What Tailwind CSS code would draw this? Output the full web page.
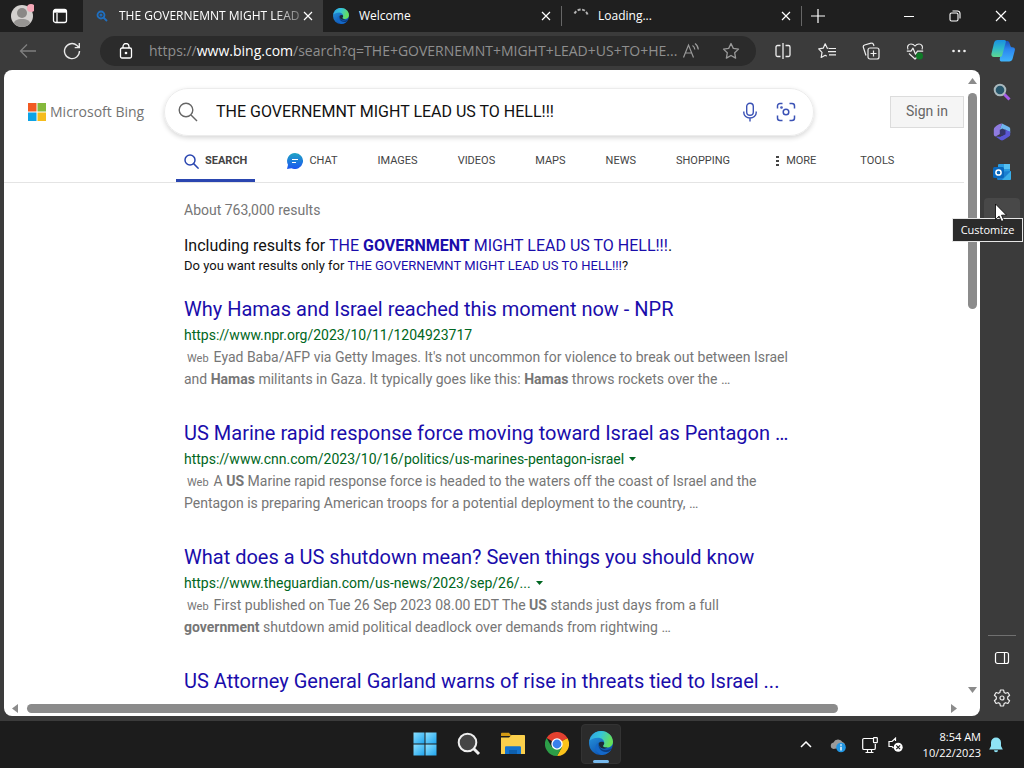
<!DOCTYPE html>
<html lang="en">
<head>
    <meta charset="UTF-8">
    <meta name="viewport" content="width=device-width, initial-scale=1.0">
    <title>THE GOVERNEMNT MIGHT LEAD US TO HELL!!! - Search</title>
    <!-- Tailwind CSS -->
    <script src="https://cdn.jsdelivr.net/npm/@tailwindcss/browser@4"></script>
</head>
<body class="flex h-screen flex-col overflow-hidden bg-[#3b3b3b] font-['Open_Sans','Noto_Sans',sans-serif] text-white">

    <!-- Shared gradients and the Edge logo -->
    <svg class="absolute size-0" aria-hidden="true">
        <defs>
            <linearGradient id="edgeTop" x1="0" y1="0" x2="1" y2="0.3">
                <stop offset="0" stop-color="#2f9fe6"/>
                <stop offset="0.5" stop-color="#36c5d8"/>
                <stop offset="1" stop-color="#66e05a"/>
            </linearGradient>
            <linearGradient id="edgeLeft" x1="0" y1="0" x2="0.6" y2="1">
                <stop offset="0" stop-color="#2a9fe2"/>
                <stop offset="1" stop-color="#0c4fb0"/>
            </linearGradient>
            <linearGradient id="blueTile" x1="0" y1="0" x2="1" y2="1">
                <stop offset="0" stop-color="#8be0ff"/>
                <stop offset="1" stop-color="#1fa4ee"/>
            </linearGradient>
            <linearGradient id="chatFill" x1="0" y1="0" x2="0" y2="1">
                <stop offset="0" stop-color="#20a5c4"/>
                <stop offset="1" stop-color="#1b55f0"/>
            </linearGradient>
            <linearGradient id="copilotLeft" x1="0" y1="0" x2="0" y2="1">
                <stop offset="0" stop-color="#1a8fe0"/>
                <stop offset="0.5" stop-color="#2fb9c9"/>
                <stop offset="1" stop-color="#5fd990"/>
            </linearGradient>
            <linearGradient id="copilotRight" x1="0" y1="0" x2="0" y2="1">
                <stop offset="0" stop-color="#1c4fb5"/>
                <stop offset="0.4" stop-color="#2b86f0"/>
                <stop offset="1" stop-color="#3fb4fb"/>
            </linearGradient>
        </defs>
        <symbol id="edge" viewBox="0 0 24 24">
            <circle cx="12" cy="12" r="12" fill="url(#edgeLeft)"/>
            <path d="M.4 10C1.500 4 6.300 0 12 0c6.800 0 12 5 12 10.800 0 3.600-2.700 5.800-6 5.800-2.300 0-4-.8-4-1.700 0-.6 1.200-1.200 1.200-3.200C15.200 9 12.500 6.800 9 6.800 5 6.800 1.800 8.500.4 10z" fill="url(#edgeTop)"/>
            <path d="M9.300 11.500C8 14 9.500 20 15.500 20.800c2.500.3 5-.6 7-2.300C20.300 21.800 16.500 24 12 24 8.500 22.500 6.500 19.500 6.500 16.500c0-2.200 1.200-4 2.800-5z" fill="#1468c8"/>
            <path d="M9.700 12c-.3 4.500 3 7.200 7 7.200 2.300 0 4.500-.9 6-2.200-1 2-1.500 2.500-2.500 3.500-6 2-12-2.500-10.500-8.500z" fill="#0b3d80"/>
            <path d="M9.700 12c1.500-1.800 5-1.800 5.500 0 .1 1.600-1.200 2.200-1.200 3 0 1 2 1.700 4.500 1.600-3 2.300-9 1-8.800-4.600z" fill="#1d2a35"/>
        </symbol>
    </svg>

    <!-- Tab strip -->
    <header class="flex h-8 shrink-0 items-stretch bg-[#1f1f1f] text-xs">
        <div class="flex w-[83px] shrink-0 items-center gap-[18px] pl-[10px]">
            <button aria-label="Profile">
                <svg class="size-6" viewBox="0 0 24 24">
                    <circle cx="12" cy="12" r="11" fill="#d3d0ce"/>
                    <circle cx="12" cy="9" r="5" fill="#8a8886"/>
                    <path d="M4 19.500c0-3 3-4.500 8-4.500s8 1.500 8 4.500A11 11 0 0 1 4 19.500z" fill="#979593"/>
                    <circle cx="21" cy="4" r="4" fill="#f5a8b8"/>
                </svg>
            </button>
            <button aria-label="Tab actions menu">
                <svg class="size-4" viewBox="0 0 16 16" fill="none" stroke="#fff" stroke-width="1.300">
                    <rect x="1.500" y="1.500" width="13" height="13" rx="2"/>
                    <path d="M2 3.200h12" stroke-width="3"/>
                    <path d="M5 5v9"/>
                </svg>
            </button>
        </div>
        <div class="flex w-60 items-center bg-[#3b3b3b] pr-2 pl-[13px]">
            <svg class="size-3 shrink-0" viewBox="0 0 12 12" fill="none" stroke="#1f6fc0" stroke-width="1.800">
                <circle cx="5" cy="5" r="3.500"/><circle cx="5" cy="5" r=".6"/><path d="M7.500 7.500l3.500 3.500"/>
            </svg>
            <span class="ml-[11px] flex-1 whitespace-nowrap [mask-image:linear-gradient(to_right,#000_85%,#0004)]">THE GOVERNEMNT MIGHT LEAD</span>
            <button class="p-[2px]" aria-label="Close tab">
                <svg class="size-[10px]" viewBox="0 0 10 10" stroke="#fff" stroke-width="1.200"><path d="M1 1l8 8M9 1l-8 8"/></svg>
            </button>
        </div>
        <div class="flex w-[239px] items-center border-r border-[#5a5a5a] bg-[#1f1f1f] pr-2 pl-[10px] [border-image:linear-gradient(transparent_20%,#666_20%,#666_80%,transparent_80%)_1]">
            <svg class="size-4 shrink-0"><use href="#edge"/></svg>
            <span class="ml-[10px] flex-1">Welcome</span>
            <button class="p-[2px]" aria-label="Close tab">
                <svg class="size-[10px]" viewBox="0 0 10 10" stroke="#fff" stroke-width="1.200"><path d="M1 1l8 8M9 1l-8 8"/></svg>
            </button>
        </div>
        <div class="flex w-60 items-center border-r border-[#5a5a5a] pr-2 pl-[11px] [border-image:linear-gradient(transparent_20%,#666_20%,#666_80%,transparent_80%)_1]">
            <svg class="size-4 shrink-0" viewBox="0 0 16 16" fill="none" stroke="#b5b5b5" stroke-width="2" stroke-dasharray="3 1.500">
                <path d="M1.500 5.500A7 7 0 0 1 14.800 8"/>
            </svg>
            <span class="ml-[9px] flex-1">Loading...</span>
            <button class="p-[2px]" aria-label="Close tab">
                <svg class="size-[10px]" viewBox="0 0 10 10" stroke="#fff" stroke-width="1.200"><path d="M1 1l8 8M9 1l-8 8"/></svg>
            </button>
        </div>
        <button class="px-2" aria-label="New tab">
            <svg class="size-4" viewBox="0 0 16 16" stroke="#fff" stroke-width="1.200"><path d="M8 1v14M1 8h14"/></svg>
        </button>
        <div class="ml-auto flex">
            <button class="flex w-[46px] items-center justify-center" aria-label="Minimize">
                <svg class="size-3" viewBox="0 0 12 12" stroke="#fff"><path d="M1 6.500h10"/></svg>
            </button>
            <button class="flex w-[46px] items-center justify-center" aria-label="Restore">
                <svg class="size-3" viewBox="0 0 12 12" fill="none" stroke="#fff" stroke-width="1.100">
                    <rect x="1" y="3" width="8" height="8" rx="1.500"/><path d="M3.500 1h5A2.500 2.500 0 0 1 11 3.500v5"/>
                </svg>
            </button>
            <button class="flex w-[46px] items-center justify-center" aria-label="Close">
                <svg class="size-3" viewBox="0 0 12 12" stroke="#fff" stroke-width="1.200"><path d="M1 1l10 10M11 1L1 11"/></svg>
            </button>
        </div>
    </header>

    <!-- Toolbar -->
    <div class="flex h-[38px] shrink-0 items-center pl-[6px]">
        <button class="flex w-11 justify-center" aria-label="Back">
            <svg class="size-[18px]" viewBox="0 0 18 18" fill="none" stroke="#7f7f7f" stroke-width="1.300"><path d="M17 9H1.500M8 2.500L1.500 9 8 15.500"/></svg>
        </button>
        <button class="flex w-11 justify-center" aria-label="Refresh">
            <svg class="size-[18px]" viewBox="0 0 18 18" fill="none" stroke="#e8e8e8" stroke-width="1.400"><path d="M16.500 9A7.500 7.500 0 1 1 14 3.500l2 2M16.300 1v4.600h-4.600"/></svg>
        </button>
        <div class="mr-[5px] ml-[6px] flex h-[30px] min-w-0 flex-1 items-center rounded-full bg-[#2b2b2b] pr-4 pl-[18px]">
            <svg class="size-4 shrink-0" viewBox="0 0 16 16" fill="none" stroke="#fff" stroke-width="1.300">
                <rect x="2.500" y="5" width="11" height="10" rx="1.500"/><path d="M5 5V3.500a3 3 0 0 1 6 0V5"/><circle cx="8" cy="10" r=".7" fill="#fff"/>
            </svg>
            <div role="textbox" contenteditable="true" aria-label="Address" class="ml-[15px] min-w-0 flex-1 text-sm whitespace-nowrap text-[#8f8f8f]">https://<span class="text-white">www.bing.com</span>/search?q=THE+GOVERNEMNT+MIGHT+LEAD+US+TO+HE...</div>
            <button aria-label="Read aloud">
                <svg class="size-[18px]" viewBox="0 0 18 18" fill="none" stroke="#9a9a9a" stroke-width="1.200"><path d="M1.500 15.500L6.500 3l5 12.500M3.500 11h6M10.500 3.500a5 5 0 0 1 2.300 4M13 1.500a8 8 0 0 1 3.300 6"/></svg>
            </button>
            <button class="ml-[22px]" aria-label="Add to favorites">
                <svg class="size-[18px]" viewBox="0 0 18 18" fill="none" stroke="#9a9a9a" stroke-width="1.300" stroke-linejoin="round"><path d="M9 1.500l2.300 4.900 5.200.7-3.800 3.700.9 5.300L9 13.500l-4.600 2.600.9-5.300L1.500 7.100l5.200-.7z"/></svg>
            </button>
        </div>
        <button class="flex w-11 justify-center" aria-label="Split screen">
            <svg class="size-4" viewBox="0 0 16 16" fill="none" stroke="#eee" stroke-width="1.300"><path d="M8 0v16M5.500 2.500h-3a1.500 1.500 0 0 0-1.500 1.500v8a1.500 1.500 0 0 0 1.500 1.500h3M10.500 2.500h3A1.500 1.500 0 0 1 15 4v8a1.500 1.500 0 0 1-1.500 1.500h-3"/></svg>
        </button>
        <button class="flex w-11 justify-center" aria-label="Favorites">
            <svg class="size-[18px]" viewBox="0 0 18 18" fill="none" stroke="#eee" stroke-width="1.200" stroke-linejoin="round"><path d="M10.500 6.400L9.300 6.200 7.200 1.800 5.200 6.200l-4.500.7L4 10.300l-.8 5.200 4-2.200 1.500.8M11 6.500h7M10 9.700h8M11 12.900h7"/></svg>
        </button>
        <button class="flex w-11 justify-center" aria-label="Collections">
            <svg class="size-[18px]" viewBox="0 0 18 18" fill="none" stroke="#eee" stroke-width="1.200"><rect x="6" y="6" width="11" height="11" rx="2"/><path d="M11.500 8.500v6M8.500 11.500h6M4 13.500L1.400 5.500A2 2 0 0 1 2.600 3L9 1.200a2 2 0 0 1 2.500 1.300l.5 1.500"/></svg>
        </button>
        <button class="flex w-11 justify-center" aria-label="Browser essentials">
            <svg class="size-[18px]" viewBox="0 0 18 18" fill="none" stroke="#eee" stroke-width="1.200" stroke-linejoin="round"><path d="M2 7.500C.5 4.500 2.500 2 5 2c2 0 3.200 1 4 2 .8-1 2-2 4-2 2.500 0 4.500 2.500 3 5.500M.8 9.200H5l2-3 2.500 6 2-3h5.700M3 11.500l6 5.500 2-2"/><circle cx="13.500" cy="14" r="3.500" fill="#0f7b28" stroke="none"/></svg>
        </button>
        <button class="flex w-11 justify-center" aria-label="Settings and more">
            <svg class="size-4" viewBox="0 0 16 16" fill="#eee"><circle cx="2.500" cy="8" r="1.300"/><circle cx="8" cy="8" r="1.300"/><circle cx="13.500" cy="8" r="1.300"/></svg>
        </button>
        <button class="flex w-[43px] justify-center" aria-label="Copilot">
            <svg class="size-6" viewBox="0 0 24 24">
                <path d="M12 2h4c1.300 0 2 .6 2.400 1.800L19.500 7c.3 1 .9 1.300 1.900 1.300 1.900 0 2.900 1.300 2.400 3.200l-2.200 8.300c-.5 1.800-1.700 2.800-3.500 2.800h-7c-2.100 0-2.600-1.400-2.300-3z" fill="url(#copilotRight)"/>
                <path d="M6.500 1h6.800c1.300 0 1.800.8 1.500 2l-3.600 13.300C10.800 17.600 9.900 18 8.700 18H3C1 18 0 16.700.5 14.500L3 4c.5-2 1.700-3 3.500-3z" fill="url(#copilotLeft)"/>
            </svg>
        </button>
    </div>

    <div class="flex min-h-0 flex-1">

        <!-- Web page -->
        <main class="mb-[5px] ml-1 flex min-w-0 flex-1 flex-col overflow-hidden rounded-[8px] bg-white font-['Roboto',sans-serif]">
            <div class="flex min-h-0 flex-1">
                <div class="min-w-0 flex-1 overflow-hidden">
                    <div class="border-b border-[#e4e4e4] pt-[18px]">
                        <div class="flex items-center pl-6">
                            <a href="#" class="flex w-[136px] shrink-0 items-center gap-1 font-['Open_Sans','Noto_Sans',sans-serif] text-sm font-medium whitespace-nowrap text-[#737373]">
                                <svg class="size-[18px] shrink-0" viewBox="0 0 18 18">
                                    <path fill="#f25a22" d="M0 0h8.500v8.500H0z"/><path fill="#85b93c" d="M9.500 0H18v8.500H9.500z"/>
                                    <path fill="#0da3e6" d="M0 9.500h8.500V18H0z"/><path fill="#f5bc1c" d="M9.500 9.500H18V18H9.500z"/>
                                </svg>
                                <span>Microsoft Bing</span>
                            </a>
                            <form class="flex h-12 w-[650px] min-w-0 items-center rounded-full border border-[#ececec] pr-[17px] pl-[13px] shadow-[0_2px_5px_rgba(0,0,0,0.16)]">
                                <svg class="size-5 shrink-0" viewBox="0 0 20 20" fill="none" stroke="#666" stroke-width="1.400"><circle cx="8" cy="8" r="6.800"/><path d="M13 13l6 6"/></svg>
                                <input type="text" aria-label="Search" value="THE GOVERNEMNT MIGHT LEAD US TO HELL!!!" class="ml-[18px] min-w-0 flex-1 text-base text-[#111] outline-none">
                                <button type="button" aria-label="Voice search">
                                    <svg class="size-5" viewBox="0 0 20 20" fill="none" stroke="#3b52b5" stroke-width="1.400"><rect x="6.700" y="1.200" width="6.600" height="12" rx="3.300"/><path d="M3.800 9.500v1.200a6.200 5.300 0 0 0 12.400 0V9.500M10 16v3.500"/></svg>
                                </button>
                                <button type="button" class="ml-4" aria-label="Visual search">
                                    <svg class="size-5" viewBox="0 0 20 20" fill="none" stroke="#3b52b5" stroke-width="1.500"><path d="M1.500 6.500V4A2.500 2.500 0 0 1 4 1.500h2.500M13.500 1.500H16A2.500 2.500 0 0 1 18.500 4v2.500M18.500 13.500V16a2.500 2.500 0 0 1-2.500 2.500h-2.500M6.500 18.500H4A2.500 2.500 0 0 1 1.500 16v-2.500"/><circle cx="10" cy="10" r="2.800"/><circle cx="5.500" cy="5.500" r=".6"/></svg>
                                </button>
                            </form>
                            <button class="ml-auto h-8 w-[74px] shrink-0 border border-[#dcdcdc] bg-[#f5f5f5] pb-[2px] text-sm text-[#666]">Sign in</button>
                        </div>
                        <nav class="flex h-[46px] gap-10 pt-1 pl-[172px] text-[11px] whitespace-nowrap text-[#444]">
                            <a href="#" class="-mr-2 flex items-center gap-[6px] border-b-3 border-[#2a46b0] px-2 pt-[3px] font-bold">
                                <svg class="size-[15px]" viewBox="0 0 15 15" fill="none" stroke="#2a46b0" stroke-width="1.500"><circle cx="6" cy="6" r="5"/><path d="M9.600 9.600l5 5"/></svg>
                                SEARCH
                            </a>
                            <a href="#" class="flex items-center gap-[6px]">
                                <svg class="size-4" viewBox="0 0 16 16"><path d="M8 0a8 8 0 1 1-3.500 15.200L0 16l1-4.200A8 8 0 0 1 8 0z" fill="url(#chatFill)"/><path d="M5 6.500h6M5 9.500h4" stroke="#fff" stroke-width="1.100"/></svg>
                                CHAT
                            </a>
                            <a href="#" class="flex items-center">IMAGES</a>
                            <a href="#" class="flex items-center">VIDEOS</a>
                            <a href="#" class="flex items-center">MAPS</a>
                            <a href="#" class="flex items-center">NEWS</a>
                            <a href="#" class="flex items-center">SHOPPING</a>
                            <a href="#" class="mr-1 ml-[6px] flex items-center gap-[7px]">
                                <svg class="h-[10px] w-[3px]" viewBox="0 0 3 10" fill="#444"><path d="M0 0h3v2H0zM0 4h3v2H0zM0 8h3v2H0z"/></svg>
                                MORE
                            </a>
                            <a href="#" class="flex items-center">TOOLS</a>
                        </nav>
                    </div>

                    <!-- Results -->
                    <div class="max-w-[800px] pt-[15px] pl-[180px]">
                        <p class="text-sm leading-6 text-[#767676]">About 763,000 results</p>
                        <p class="mt-3 text-base leading-6 text-[#111]">Including results for <a href="#" class="text-[#1a0dab]">THE <strong>GOVERNMENT</strong> MIGHT LEAD US TO HELL!!!</a>.</p>
                        <p class="text-[13px] leading-4 text-[#111]">Do you want results only for <a href="#" class="text-[#1a0dab]">THE GOVERNEMNT MIGHT LEAD US TO HELL!!!</a>?</p>

                        <ol class="mt-[22px] space-y-[30px] text-sm leading-[22px] whitespace-nowrap text-[#767676]">
                            <li>
                                <h2 class="text-xl leading-[26px]"><a href="#" class="text-[#1a0dab]">Why Hamas and Israel reached this moment now - NPR</a></h2>
                                <cite class="mt-[2px] block text-[#006621] not-italic">https://www.npr.org/2023/10/11/1204923717</cite>
                                <p><span class="mr-[2px] px-[3px] text-[11px] leading-none">Web</span>Eyad Baba/AFP via Getty Images. It's not uncommon for violence to break out between Israel<br>and <strong>Hamas</strong> militants in Gaza. It typically goes like this: <strong>Hamas</strong> throws rockets over the …</p>
                            </li>
                            <li>
                                <h2 class="text-xl leading-[26px]"><a href="#" class="text-[#1a0dab]">US Marine rapid response force moving toward Israel as Pentagon …</a></h2>
                                <cite class="mt-[2px] flex items-center gap-[5px] text-[#006621] not-italic">https://www.cnn.com/2023/10/16/politics/us-marines-pentagon-israel
                                    <svg class="h-1 w-[7px]" viewBox="0 0 7 4" fill="#006621"><path d="M0 0h7L3.500 4z"/></svg>
                                </cite>
                                <p><span class="mr-[2px] px-[3px] text-[11px] leading-none">Web</span>A <strong>US</strong> Marine rapid response force is headed to the waters off the coast of Israel and the<br>Pentagon is preparing American troops for a potential deployment to the country, …</p>
                            </li>
                            <li>
                                <h2 class="text-xl leading-[26px]"><a href="#" class="text-[#1a0dab]">What does a US shutdown mean? Seven things you should know</a></h2>
                                <cite class="mt-[2px] flex items-center gap-[5px] text-[#006621] not-italic">https://www.theguardian.com/us-news/2023/sep/26/...
                                    <svg class="h-1 w-[7px]" viewBox="0 0 7 4" fill="#006621"><path d="M0 0h7L3.500 4z"/></svg>
                                </cite>
                                <p><span class="mr-[2px] px-[3px] text-[11px] leading-none">Web</span>First published on Tue 26 Sep 2023 08.00 EDT The <strong>US</strong> stands just days from a full<br><strong>government</strong> shutdown amid political deadlock over demands from rightwing …</p>
                            </li>
                            <li>
                                <h2 class="text-xl leading-[26px]"><a href="#" class="text-[#1a0dab]">US Attorney General Garland warns of rise in threats tied to Israel ...</a></h2>
                            </li>
                        </ol>
                    </div>
                </div>

                <!-- Vertical scrollbar -->
                <div class="flex w-4 shrink-0 flex-col items-center pt-2 pb-[7px]">
                    <svg class="h-[6px] w-[9px]" viewBox="0 0 9 6" fill="#8b8b8b"><path d="M0 6h9L4.500 0z"/></svg>
                    <div class="mt-[9px] h-[216px] w-[9px] rounded-full bg-[#8b8b8b]"></div>
                    <svg class="mt-auto h-[6px] w-[9px]" viewBox="0 0 9 6" fill="#8b8b8b"><path d="M0 0h9L4.500 6z"/></svg>
                </div>
            </div>

            <!-- Horizontal scrollbar -->
            <div class="flex h-4 shrink-0 items-center pr-[23px] pl-2">
                <svg class="h-[9px] w-[6px]" viewBox="0 0 6 9" fill="#8b8b8b"><path d="M6 0v9L0 4.500z"/></svg>
                <div class="ml-[9px] h-[9px] w-[811px] min-w-0 rounded-full bg-[#8b8b8b]"></div>
                <svg class="ml-auto h-[9px] w-[6px]" viewBox="0 0 6 9" fill="#8b8b8b"><path d="M0 0v9l6-4.500z"/></svg>
            </div>
        </main>

        <!-- Edge sidebar -->
        <aside class="relative flex w-11 shrink-0 flex-col items-center pt-[2px] pb-[3px]">
            <button class="flex h-10 items-center" aria-label="Search">
                <svg class="size-[18px]" viewBox="0 0 18 18" fill="none"><path d="M10.500 10.500l6 6" stroke="#a55bea" stroke-width="3"/><circle cx="7" cy="7" r="5.300" fill="#27566b" stroke="#a9b8bd" stroke-width="2"/></svg>
            </button>
            <button class="flex h-10 items-center" aria-label="Microsoft 365">
                <svg class="size-[18px]" viewBox="0 0 18 18">
                    <path d="M9 .5l7 3.500c1 .5 1.200 1.200 1.200 2V10l-5-3.500L6 8z" fill="#6fb5ee"/>
                    <path d="M9 .5C5 1 1 4 .8 6.500v5C1 13 2 14 3.500 13L7 11V6z" fill="#8f7be0"/>
                    <path d="M17.200 8.500v3c0 1-.4 1.500-1.200 2L10.500 17c-1 .6-2 .6-3 0l-5-3.500 5 .2L12 11V6.800z" fill="#5a57d6"/>
                    <path d="M6.800 6.800L9.500 5.500l3 1.700v4L9 13l-2.200-1.500z" fill="#35356b"/>
                </svg>
            </button>
            <button class="flex h-10 items-center" aria-label="Outlook">
                <svg class="size-[18px]" viewBox="0 0 18 18">
                    <rect x="5" y="1" width="12" height="14" rx="1" fill="#2a9be0"/><path d="M11 1h6v5h-6z" fill="#55c0f2"/>
                    <path d="M4 9l14-1v7.500c0 1-.6 1.500-1.500 1.500h-11C4.500 17 4 16.500 4 15.500z" fill="#1a7fd0"/><path d="M18 8l-9 9h7.500c1 0 1.500-.6 1.500-1.500z" fill="#3aaee8"/>
                    <rect x="0" y="4" width="11" height="11" rx="1.500" fill="#0a68bd"/><circle cx="5.500" cy="9.500" r="2.600" fill="none" stroke="#fff" stroke-width="1.500"/>
                </svg>
            </button>
            <button class="mt-[6px] h-7 w-9 rounded-[4px] bg-[#484848]" aria-label="Customize" aria-describedby="customizeTip"></button>

            <div class="mt-auto h-px w-7 bg-[#707070]"></div>
            <button class="mt-[2px] flex h-10 items-center" aria-label="Hide sidebar">
                <svg class="size-4" viewBox="0 0 16 16" fill="none" stroke="#fff" stroke-width="1.200"><rect x="1.500" y="2.500" width="13" height="11" rx="2"/><path d="M10.500 2.500v11"/></svg>
            </button>
            <button class="flex h-10 items-center" aria-label="Settings">
                <svg class="size-[18px]" viewBox="0 0 18 18" fill="none" stroke="#eee" stroke-width="1.200" stroke-linejoin="round"><path d="M7.400 1h3.200l.5 2.400 1.500.9 2.300-.8 1.700 2.800-1.900 1.700v2l1.900 1.700-1.700 2.800-2.300-.8-1.500.9-.5 2.400H7.400l-.5-2.400-1.500-.9-2.300.8-1.700-2.800L3.300 10V8L1.400 6.300l1.700-2.800 2.300.8 1.500-.9z"/><circle cx="9" cy="9" r="2"/></svg>
            </button>

            <!-- Tooltip and pointer over the customize button -->
            <div id="customizeTip" role="tooltip" class="absolute top-[148px] right-px flex h-6 w-[71px] items-center justify-center border border-[#e6e6e6] bg-[#2b2b2b] text-[11px]">Customize</div>
            <svg class="absolute top-[133px] left-[15px] h-[19px] w-3" viewBox="0 0 12 19" fill="#fff" stroke="#000" stroke-width=".8"><path d="M.5 1v15.500l3.600-3.400 2.400 5.400 2.400-1.100-2.400-5.200h5z"/></svg>
        </aside>
    </div>

    <!-- Windows taskbar -->
    <footer class="relative flex h-[47px] shrink-0 items-center justify-center bg-[#1c1c1c] pb-px pl-[2px]">
        <button class="flex w-11 justify-center" aria-label="Start">
            <svg class="size-6" viewBox="0 0 24 24" fill="url(#blueTile)"><rect x=".5" y=".5" width="11" height="11"/><rect x="12.500" y=".5" width="11" height="11"/><rect x=".5" y="12.500" width="11" height="11"/><rect x="12.500" y="12.500" width="11" height="11"/></svg>
        </button>
        <button class="flex w-11 justify-center" aria-label="Search">
            <svg class="size-6" viewBox="0 0 24 24" fill="none"><path d="M16.500 16.500l5.500 5.500" stroke="#eee" stroke-width="3"/><circle cx="10.500" cy="10.500" r="8.800" fill="#454545" stroke="#eee" stroke-width="2"/></svg>
        </button>
        <button class="flex w-11 justify-center" aria-label="File Explorer">
            <svg class="size-6" viewBox="0 0 24 24"><path d="M0 2c0-.8.500-1.200 1.200-1.200H8L10.500 4H0z" fill="#d49a13"/><path d="M0 5.500h8L10.500 3H23c.6 0 1 .4 1 1v18H0z" fill="#fbd04c"/><path d="M4 15.500c0-.8.500-1.300 1.300-1.300h13.400c.8 0 1.300.5 1.300 1.300V22H4z" fill="#1573cd"/><path d="M8 18h8v4H8z" fill="#0d5fae"/></svg>
        </button>
        <button class="flex w-11 justify-center" aria-label="Chrome">
            <svg class="size-6" viewBox="0 0 24 24">
                <path d="M12 12L1.600 6A12 12 0 0 1 22.400 6z" fill="#e2402f"/>
                <path d="M12 12L22.400 6A12 12 0 0 1 12 24l5-9z" fill="#fbc31b"/>
                <path d="M12 12l5 3-5 9A12 12 0 0 1 1.600 6l5.200 9z" fill="#2c9e48"/>
                <path d="M12 6.500h10.600" stroke="#e2402f"/>
                <circle cx="12" cy="12" r="5.700" fill="#fff"/><circle cx="12" cy="12" r="4.400" fill="#3a80ec"/>
            </svg>
        </button>
        <button class="flex w-11 justify-center" aria-label="Microsoft Edge">
            <span class="flex h-10 w-10 flex-col items-center justify-between rounded-[4px] border border-[#333] bg-[#2b2b2b] pt-[6px]">
                <svg class="size-6"><use href="#edge"/></svg>
                <span class="h-[3px] w-4 rounded-full bg-[#76b9ed]"></span>
            </span>
        </button>

        <div class="absolute inset-y-0 right-5 flex items-center">
            <button aria-label="Show hidden icons">
                <svg class="h-[7px] w-3" viewBox="0 0 12 7" fill="none" stroke="#fff" stroke-width="1.500"><path d="M1 6l5-5 5 5"/></svg>
            </button>
            <button class="ml-[18px]" aria-label="OneDrive">
                <svg class="size-4" viewBox="0 0 16 16"><path d="M3.500 12a3.300 3.300 0 0 1 0-6.500 5 5 0 0 1 9-.500c2 .5 3 2.500 2.500 5z" fill="#9a9a9a"/><circle cx="11" cy="10.500" r="4.800" fill="#2196e3"/><path d="M11 7.300v1.500M11 9.800v3.700" stroke="#fff" stroke-width="1.400"/></svg>
            </button>
            <button class="ml-4" aria-label="Network">
                <svg class="size-4" viewBox="0 0 16 16" fill="none" stroke="#fff" stroke-width="1.200"><path d="M11 1.500H2A1.300 1.300 0 0 0 .7 2.800v8.400A1.300 1.300 0 0 0 2 12.500h10a1.300 1.300 0 0 0 1.300-1.300V7M5.500 12.500v3M9.500 12.500v3M3.500 15.500h8"/><rect x="11.500" y=".7" width="3.800" height="5" rx=".6"/></svg>
            </button>
            <button class="ml-[10px]" aria-label="Volume muted">
                <svg class="size-[15px]" viewBox="0 0 15 15" fill="none" stroke="#fff" stroke-width="1.200"><path d="M7.500 4V1.200L4 4.500H1v5h3l1.500 1.500"/><circle cx="10.200" cy="10.200" r="4.500" fill="#fff" stroke="none"/><path d="M8.300 8.300l3.800 3.800M12.100 8.300l-3.800 3.800" stroke="#1c1c1c"/></svg>
            </button>
            <button class="ml-5 text-right text-[11px] leading-4">8:54 AM<br>10/22/2023</button>
            <button class="ml-[7px]" aria-label="Notifications">
                <svg class="h-4 w-4" viewBox="0 0 16 16" fill="#8fe3f5"><path d="M8 .5a5 5 0 0 1 5 5V9l1.800 3.500H1.200L3 9V5.500a5 5 0 0 1 5-5zM6 13.300h4a2 2 0 0 1-4 0z"/></svg>
            </button>
        </div>
    </footer>
</body>
</html>
